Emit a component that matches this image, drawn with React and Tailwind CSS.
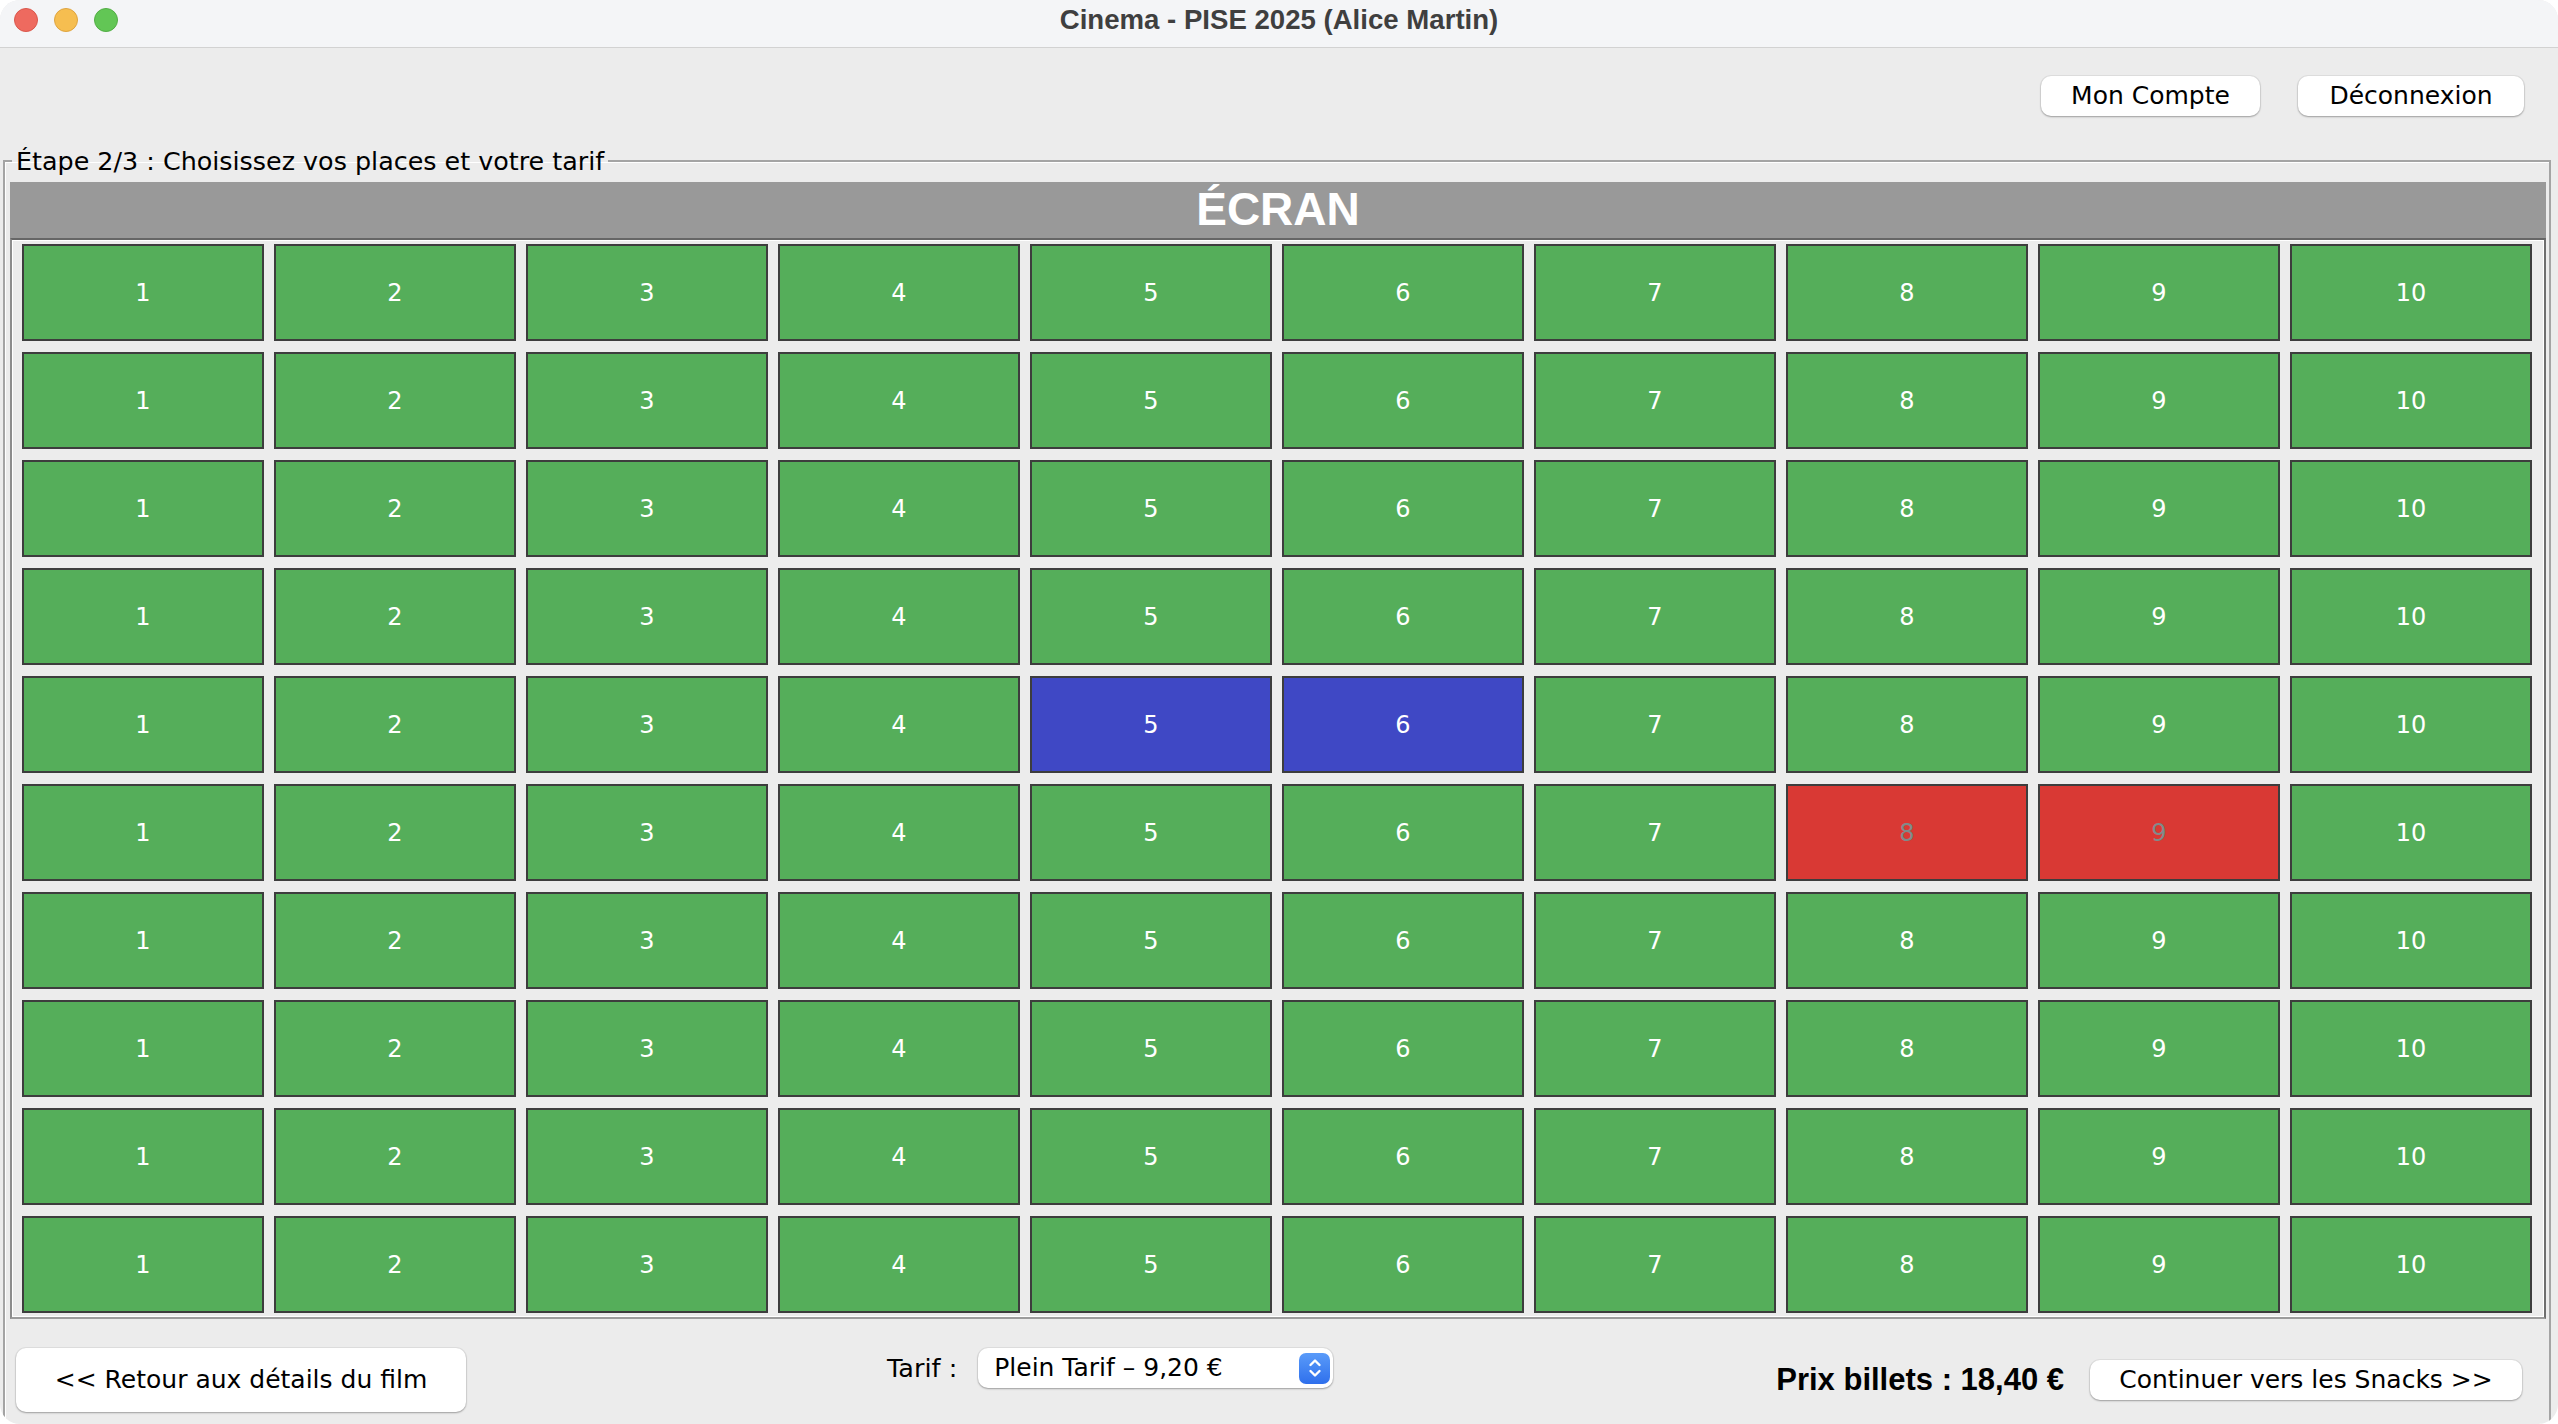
import React from "react";

const selected = { "4-4": true, "4-5": true };
const taken = { "5-7": true, "5-8": true };

function MacButton({ children, className = "" }) {
  return (
    <button
      className={`bg-white rounded-[10px] shadow-[0_1px_2px_rgba(0,0,0,0.3),0_0_0_1px_rgba(0,0,0,0.05)] text-[25px] text-black font-[family-name:DejaVu_Sans,sans-serif] flex items-center justify-center ${className}`}
    >
      {children}
    </button>
  );
}

function Seat({ n, state }) {
  let cls = "bg-[#55ae5a] text-white";
  if (state === "selected") cls = "bg-[#3f48c5] text-white";
  if (state === "taken") cls = "bg-[#d93934] text-[#7f8b8b]";
  return (
    <div className={`h-[97px] flex items-center justify-center border-2 border-[#3d3d3d] text-[24px] ${cls}`}>
      {n}
    </div>
  );
}

export default function App() {
  const rows = Array.from({ length: 10 }, (_, r) => r);
  const cols = Array.from({ length: 10 }, (_, c) => c);

  return (
    <div className="w-[2558px] h-[1424px] overflow-hidden rounded-[20px] bg-[#ececec] flex flex-col font-[family-name:DejaVu_Sans,sans-serif]">
      {/* Title bar */}
      <div className="h-[48px] shrink-0 bg-[#f4f5f7] border-b border-[#d2d2d2] grid grid-cols-[1fr_auto_1fr] items-start pt-[8px]">
        <div className="flex items-center gap-[16px] pl-[14px]">
          <span className="w-[24px] h-[24px] rounded-full bg-[#ee6a5f] border border-[#d9574c]" />
          <span className="w-[24px] h-[24px] rounded-full bg-[#f6be50] border border-[#dea440]" />
          <span className="w-[24px] h-[24px] rounded-full bg-[#62c655] border border-[#52ad45]" />
        </div>
        <div className="font-[family-name:Liberation_Sans,sans-serif] font-bold text-[27.6px] leading-[24px] text-[#3f3f3f]">
          Cinema - PISE 2025 (Alice Martin)
        </div>
        <div />
      </div>

      {/* Top actions */}
      <div className="h-[99px] shrink-0 flex justify-end items-start gap-[38px] pt-[28px] pr-[34px]">
        <MacButton className="w-[219px] h-[40px]">Mon Compte</MacButton>
        <MacButton className="w-[226px] h-[40px]">Déconnexion</MacButton>
      </div>

      {/* Step fieldset */}
      <fieldset className="ml-[3px] mr-[7px] h-[1300px] shrink-0 border-2 border-[#a4a4a4] shadow-[inset_1px_1px_0_#ffffff] pl-[5px] pr-[3px] pt-[7px]">
        <legend className="ml-[2px] px-[4px] text-[25.4px] leading-[28px] text-black">
          Étape 2/3 : Choisissez vos places et votre tarif
        </legend>

        {/* Screen */}
        <div className="h-[56px] bg-[#999999] flex items-center justify-center">
          <span className="font-[family-name:Liberation_Sans,sans-serif] font-bold text-[46px] leading-none text-white -mt-[2px]">
            ÉCRAN
          </span>
        </div>

        {/* Seats panel */}
        <div className="border-2 border-t-[#666666] border-l-[#8c8c8c] border-r-[#6e6e6e] border-b-[#9c9c9c] shadow-[inset_1px_1px_0_#ffffff,inset_-1px_-1px_0_#ffffff] pt-[4px] pb-[4px] pl-[10px] pr-[12px]">
          <div className="grid grid-cols-10 gap-x-[10px] gap-y-[11px]">
            {rows.map((r) =>
              cols.map((c) => {
                const key = `${r}-${c}`;
                const state = selected[key] ? "selected" : taken[key] ? "taken" : "free";
                return <Seat key={key} n={c + 1} state={state} />;
              })
            )}
          </div>
        </div>

        {/* Bottom controls */}
        <div className="flex items-start pt-[29px]">
          <MacButton className="ml-[6px] w-[450px] h-[64px]">&lt;&lt; Retour aux détails du film</MacButton>

          <div className="flex-1 flex justify-center pr-[22px]">
            <div className="flex items-center gap-[21px] h-[40px]">
              <span className="text-[25.5px] text-black">Tarif :</span>
              <div className="w-[355px] h-[40px] bg-white rounded-[10px] shadow-[0_1px_2px_rgba(0,0,0,0.3),0_0_0_1px_rgba(0,0,0,0.05)] flex items-center justify-between pl-[16px] pr-[3px]">
                <span className="text-[25px] text-black">Plein Tarif – 9,20 €</span>
                <span className="w-[31px] h-[31px] rounded-[7px] bg-gradient-to-b from-[#5a9bf9] to-[#2f6fec] flex items-center justify-center">
                  <svg width="16" height="24" viewBox="0 0 16 24" fill="none" stroke="white" strokeWidth="2.4" strokeLinecap="round" strokeLinejoin="round">
                    <path d="M3.5 9 L8 4.5 L12.5 9" />
                    <path d="M3.5 15 L8 19.5 L12.5 15" />
                  </svg>
                </span>
              </div>
            </div>
          </div>

          <div className="flex items-center gap-[26px] mt-[12px] mr-[24px] h-[40px]">
            <span className="font-[family-name:Liberation_Sans,sans-serif] font-bold text-[31px] text-black">
              Prix billets : 18,40 €
            </span>
            <MacButton className="w-[432px] h-[40px]">Continuer vers les Snacks &gt;&gt;</MacButton>
          </div>
        </div>
      </fieldset>
    </div>
  );
}
